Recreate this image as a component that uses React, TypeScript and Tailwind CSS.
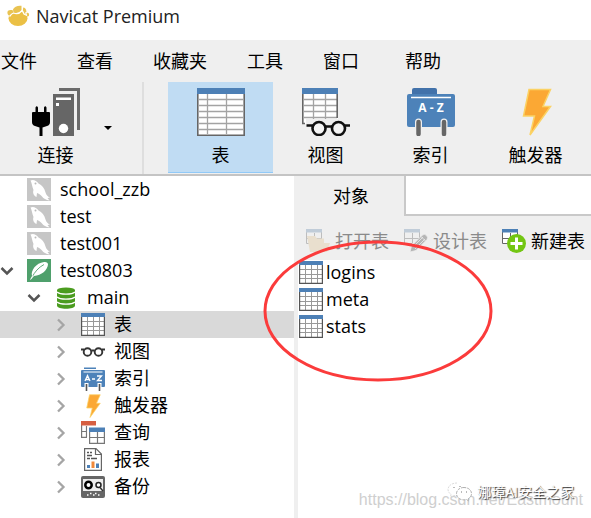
import React from "react";

type IconProps = { className?: string };

function AppLogo() {
  return (
    <svg className="h-[22px] w-6 shrink-0" viewBox="0 0 24 22" aria-hidden="true">
      <ellipse cx="12" cy="13.500" rx="9.500" ry="7.500" fill="#ebc045" />
      <path d="M1.500 8.500C.800 5.500 3 4.500 6.500 5L7.500 7.500 4.500 11C3 11 1.800 10 1.500 8.500Z" fill="#e9c352" />
      <path d="M7 4.500C8 1.500 12 .3 15.500 .8V5.500C13 8 9.500 8.800 7.500 7.500Z" fill="#e9c352" />
      <path d="M17.200 2.500C19 2.500 20 4 20.500 6.500L18.300 8.500 16.800 6Z" fill="#e9c352" />
      <path d="M20.500 8c1.700-.6 3 .3 2.500 2.300-.3 1-1 1.400-1.800 1.200Z" fill="#e9c352" />
      <path d="M3.500 11.500C5 9.500 6 8.500 7.500 8 11 9.500 14.500 7.500 16.200 5.500L18 9 21 10.500" fill="none" stroke="#fff" strokeWidth="1.300" />
    </svg>
  );
}

function ConnectionIcon() {
  return (
    <svg className="h-12 w-[50px]" viewBox="0 0 50 48" aria-hidden="true">
      <path d="M28 1.500H47.500V42" fill="none" stroke="#6b6b6b" strokeWidth="3" />
      <path d="M22 6H43V48H22Z" fill="#666" />
      <path d="M25 9.500H40V12H25ZM25 15H28V18H25Z" fill="#fff" />
      <circle cx="32.500" cy="40.500" r="4.700" fill="#fff" />
      <path d="M1 25Q1 24 2 24H4.500V19.500Q5.700 17 7 19.500V24H13V19.500Q14.300 17 15.500 19.500V24H18Q19 24 19 25V34Q19 37 16 38L11.500 39.500V48H8.500V39.500L4 38Q1 37 1 34Z" fill="#000" />
    </svg>
  );
}

function TableLargeIcon() {
  return (
    <svg className="size-12" viewBox="0 0 48 48" aria-hidden="true">
      <path d="M1 1H47V47H1Z" fill="#fff" />
      <path d="M2 11.500H46M2 17.500H46M2 23.500H46M2 29.500H46M2 35.500H46M2 41.500H46M10.500 6V46M29.500 6V46" stroke="#a3a3a3" strokeWidth="1.300" />
      <path d="M.800 5V47.200H47.200V5" fill="none" stroke="#666" strokeWidth="1.600" />
      <path d="M0 0H48V6H0Z" fill="#4d80b6" />
    </svg>
  );
}

function ViewLargeIcon() {
  return (
    <svg className="size-12" viewBox="0 0 48 48" aria-hidden="true">
      <path d="M0 1H36V31H4V36H0Z" fill="#fff" />
      <path d="M2 11.500H35M2 17.500H35M2 23.500H35M2 29.500H35M11.500 6V31M23.500 6V31" stroke="#a3a3a3" strokeWidth="1.300" />
      <path d="M.800 5V35.500H3M35.200 5V30" fill="none" stroke="#666" strokeWidth="1.600" />
      <path d="M0 0H36V6H0Z" fill="#4d80b6" />
      <g fill="#f5f5f5" stroke="#111" strokeWidth="2.600">
        <path d="M4.500 37.500H11M42 37.500H48M23 38.500H30" />
        <circle cx="17" cy="40.500" r="6.500" />
        <circle cx="36.500" cy="40.500" r="6.500" />
      </g>
    </svg>
  );
}

function IndexIcon({ className }: IconProps) {
  return (
    <svg className={className} viewBox="0 0 48 48" aria-hidden="true">
      <path d="M5 7V2Q5 0 7 0H28Q30 0 30 2V7Z" fill="#4272aa" />
      <rect y="6" width="48" height="33" rx="2" fill="#4d82b9" />
      <path d="M4 9.500H44" stroke="#fff" strokeWidth="1.500" />
      <text x="24" y="24" textAnchor="middle" fill="#fff" fontSize="12" fontWeight="700" fontFamily="Open Sans, sans-serif">A - Z</text>
      <path d="M11.500 34V45M37 34V45" stroke="#f0f0f0" strokeWidth="7" strokeLinecap="round" />
      <path d="M11.500 34V46M37 34V46" stroke="#666" strokeWidth="4.500" strokeLinecap="round" />
    </svg>
  );
}

function IndexSmallIcon() {
  return (
    <svg className="h-6 w-6" viewBox="0 0 24 24" aria-hidden="true">
      <path d="M3 .5H15V2H3Z" fill="#4d82b9" />
      <rect y="3" width="24" height="17" rx="1" fill="#4d82b9" />
      <path d="M2.500 5H21.500" stroke="#fff" />
      <path d="M4 14L6.500 8.500 9 14M5 12.500H8M11 12H14M16 9H20.500L16.500 13.500H21" fill="none" stroke="#fff" strokeWidth="1.300" />
      <path d="M5.500 16V24M18.500 16V24" stroke="#fff" strokeWidth="4" />
      <path d="M5.500 17V24M18.500 17V24" stroke="#555" strokeWidth="1.600" />
    </svg>
  );
}

function BoltIcon({ className }: IconProps) {
  return (
    <svg className={className} viewBox="0 0 48 48" aria-hidden="true">
      <path d="M17 1.500H38.500L31 18.500H38.500L18 47 22.500 28H11.500Z" fill="#fba834" stroke="#fbd264" strokeWidth="1.500" />
    </svg>
  );
}

function TableIcon() {
  return (
    <svg className="h-[23px] w-6" viewBox="0 0 24 23" aria-hidden="true">
      <path d="M0 0H24V23H0Z" fill="#fff" />
      <path d="M1 8.500H23M1 13.500H23M1 17.500H23M6.500 4V22M12.500 4V22M18.500 4V22" stroke="#999" />
      <path d="M.500 3V22.500H23.500V3" fill="none" stroke="#555" strokeWidth="1.400" />
      <path d="M0 0H24V4H0Z" fill="#4d80b6" />
    </svg>
  );
}

function GlassesIcon() {
  return (
    <svg className="h-[23px] w-6" viewBox="0 0 24 23" aria-hidden="true">
      <g fill="none" stroke="#333" strokeWidth="1.900">
        <path d="M0 9.500H3M21 9.500H24M10.500 10.500H13.500" />
        <circle cx="6.500" cy="12" r="3.800" />
        <circle cx="17.500" cy="12" r="3.800" />
      </g>
    </svg>
  );
}

function QueryIcon() {
  return (
    <svg className="h-6 w-6" viewBox="0 0 24 24" aria-hidden="true">
      <path d="M.600 4V16.400H6M5.500 5V16M1 10.500H6" fill="none" stroke="#777" strokeWidth="1.200" />
      <path d="M0 0H15V4.500H0Z" fill="#d65f42" />
      <path d="M6.500 5.500H24V24H6.500Z" fill="#fff" />
      <path d="M8.600 10V22.400H23.400V10M9 16.500H23M16.500 10V22" fill="none" stroke="#777" strokeWidth="1.200" />
      <path d="M8 6.500H24V11H8Z" fill="#4d80b6" />
    </svg>
  );
}

function ReportIcon() {
  return (
    <svg className="h-[23px] w-6" viewBox="0 0 24 23" aria-hidden="true">
      <path d="M3.600.600H15L20.400 6V22.400H3.600Z" fill="#fff" stroke="#666" strokeWidth="1.200" />
      <path d="M14.500 1V6.500H20" fill="none" stroke="#666" strokeWidth="1.200" />
      <path d="M6 4.500H8M9 4.500H11M6 7.500H11M6 10.500H9M10 10.500H16" stroke="#555" strokeWidth="1.300" />
      <path d="M6 17H9V20H6ZM15 15.500H18V20H15Z" fill="#4d80b6" />
      <path d="M10.500 13.500H13.500V20H10.500Z" fill="#f0893b" />
    </svg>
  );
}

function BackupIcon() {
  return (
    <svg className="h-[22px] w-6" viewBox="0 0 24 22" aria-hidden="true">
      <rect width="24" height="22" rx="2" fill="#666" />
      <path d="M2 3H22V15H2Z" fill="#eee" />
      <circle cx="7.500" cy="9" r="3.200" fill="#fff" stroke="#000" strokeWidth="2.500" />
      <circle cx="17.500" cy="9" r="2.500" fill="#fff" stroke="#222" strokeWidth="1.500" />
      <path d="M19 11.500L22 15" stroke="#333" strokeWidth="1.500" />
      <path d="M6 19H7.500M9 17.500H10.500M12 19H13.500M14 17.500H15.500M17 19H18.500" stroke="#fff" strokeWidth="1.500" />
    </svg>
  );
}

function MySqlIcon() {
  return (
    <svg className="h-[23px] w-6" viewBox="0 0 24 23" aria-hidden="true">
      <path d="M0 0H24V23H0Z" fill="#c6c6c6" />
      <path d="M3.500 2.500C6 1 9.500 2.500 11.500 5.500 15 7 17.500 10.500 18.500 14.500 19.300 17 20.500 18.500 23 19.500L20.500 20 22.500 22.500C19 22 16.500 20.500 15 18.500 13.500 16.500 11.500 15.500 10 15L9.500 19C6.500 18 5.500 14.500 6.500 12 5 8.500 5 5.500 3.500 2.500Z" fill="#fff" />
      <circle cx="8.500" cy="5.500" r="1" fill="#bbb" />
    </svg>
  );
}

function SqliteIcon() {
  return (
    <svg className="h-[23px] w-6" viewBox="0 0 24 23" aria-hidden="true">
      <path d="M0 0H24V23H0Z" fill="#4fa06c" />
      <path d="M5 17C3.500 11.500 9 4 17 3 19.500 2.700 21 3.500 21 5.500 20.500 11 14.500 16.500 7 17L4 20.500Z" fill="#fff" />
      <path d="M5 18.500C7.500 13 11.500 8.500 17 5.500" fill="none" stroke="#4fa06c" strokeWidth=".9" />
      <path d="M3.500 20.500L6 16.500" stroke="#fff" strokeWidth="1" />
    </svg>
  );
}

function DatabaseIcon() {
  return (
    <svg className="h-[22px] w-6" viewBox="0 0 24 22" aria-hidden="true">
      <path d="M3 3V18.500C3 22.800 21 22.800 21 18.500V3Z" fill="#4b9c1f" />
      <ellipse cx="12" cy="3.200" rx="9" ry="2.700" fill="#4b9c1f" />
      <path d="M3 5C6 7.800 18 7.800 21 5M3 10C6 12.800 18 12.800 21 10M3 15C6 17.800 18 17.800 21 15" fill="none" stroke="#fff" strokeWidth="1.300" />
    </svg>
  );
}

function SmallGrid({ dark }: { dark?: boolean }) {
  return (
    <>
      <path d="M.500 3V14.500H8M8.500 4V14M1 9.500H16M15.500 3V9" fill="none" stroke={dark ? "#666" : "#bdbdbd"} />
      <path d="M0 0H16V3.500H0Z" fill={dark ? "#4d80b6" : "#c0ccd8"} />
    </>
  );
}

function OpenTableIcon() {
  return (
    <svg className="size-6" viewBox="0 0 24 24" aria-hidden="true">
      <SmallGrid />
      <path d="M1 7H9L11 9.500H18V14H24L21 23H4Z" fill="#e9dfce" />
    </svg>
  );
}

function DesignTableIcon() {
  return (
    <svg className="size-6" viewBox="0 0 24 24" aria-hidden="true">
      <SmallGrid />
      <path d="M6 23L7.500 17 18.500 6Q20.500 4.500 22.500 6.500 24.500 8.500 23 10.500L12 21.500Z" fill="#b5b5b5" stroke="#efefef" strokeWidth=".8" />
      <path d="M17 7.500L21.500 12M9 18L19 8M11 20L21 10" stroke="#e7e7e7" strokeWidth=".9" />
    </svg>
  );
}

function NewTableIcon() {
  return (
    <svg className="size-6" viewBox="0 0 24 24" aria-hidden="true">
      <path d="M0 0H16V15H0Z" fill="#fff" />
      <SmallGrid dark />
      <circle cx="14.500" cy="14.500" r="9.500" fill="#73c613" />
      <path d="M14.500 8.500V20.500M8.500 14.500H20.500" stroke="#fff" strokeWidth="3" />
    </svg>
  );
}

function Chevron({ open }: { open: boolean }) {
  return (
    <svg className="size-3.5" viewBox="0 0 14 14" fill="none" aria-hidden="true">
      {open ? (
        <path d="M1.500 4L7 9.500 12.500 4" stroke="#555" strokeWidth="2.500" />
      ) : (
        <path d="M4 1.500L9.500 7 4 12.500" stroke="#a5a5a5" strokeWidth="2.300" />
      )}
    </svg>
  );
}

const menus = ["文件", "查看", "收藏夹", "工具", "窗口", "帮助"];

const tools = [
  { label: "表", icon: <TableLargeIcon />, active: true },
  { label: "视图", icon: <ViewLargeIcon /> },
  { label: "索引", icon: <IndexIcon className="size-12" /> },
  { label: "触发器", icon: <BoltIcon className="size-12" /> },
];

type Node = { label: string; level: 0 | 1 | 2; icon: React.ReactNode; open?: boolean; selected?: boolean };

const nodes: Node[] = [
  { label: "school_zzb", level: 0, icon: <MySqlIcon /> },
  { label: "test", level: 0, icon: <MySqlIcon /> },
  { label: "test001", level: 0, icon: <MySqlIcon /> },
  { label: "test0803", level: 0, icon: <SqliteIcon />, open: true },
  { label: "main", level: 1, icon: <DatabaseIcon />, open: true },
  { label: "表", level: 2, icon: <TableIcon />, open: false, selected: true },
  { label: "视图", level: 2, icon: <GlassesIcon />, open: false },
  { label: "索引", level: 2, icon: <IndexSmallIcon />, open: false },
  { label: "触发器", level: 2, icon: <BoltIcon className="size-6" />, open: false },
  { label: "查询", level: 2, icon: <QueryIcon />, open: false },
  { label: "报表", level: 2, icon: <ReportIcon />, open: false },
  { label: "备份", level: 2, icon: <BackupIcon />, open: false },
];

const indent = ["pl-0", "pl-[27px]", "pl-[54px]"];

const actions = [
  { label: "打开表", icon: <OpenTableIcon />, disabled: true },
  { label: "设计表", icon: <DesignTableIcon />, disabled: true },
  { label: "新建表", icon: <NewTableIcon />, disabled: false },
];

export default function App() {
  return (
    <div className="relative flex min-h-screen flex-col overflow-hidden bg-white font-['Open_Sans','Noto_Sans_CJK_SC',sans-serif] text-lg leading-[27px] text-black">
      <header className="flex h-10 items-center gap-1.5 pb-2 pl-1.5">
        <AppLogo />
        <h1 className="text-[#222]">Navicat Premium</h1>
      </header>

      <nav className="grid h-[42px] grid-cols-[76px_76px_94px_76px_82px_auto] items-center bg-[#efefef] pl-px">
        {menus.map((m) => (
          <button key={m} type="button" className="text-left whitespace-nowrap">
            {m}
          </button>
        ))}
      </nav>

      <div className="flex h-[94px] border-b-2 border-[#c4c4c4] bg-[#efefef]">
        <div className="flex w-36 items-start border-r-2 border-[#dedede] pl-[3px]">
          <button type="button" className="flex w-[105px] flex-col items-center gap-1.5 pt-1.5">
            <ConnectionIcon />
            <span>连接</span>
          </button>
          <button type="button" aria-label="连接选项" className="-ml-1 mt-10 flex h-3 w-2 items-center">
            <svg className="h-1 w-2" viewBox="0 0 8 4" aria-hidden="true">
              <path d="M0 0H8L4 4Z" fill="#000" />
            </svg>
          </button>
        </div>
        <div className="flex pl-6">
          {tools.map((t) => (
            <button
              key={t.label}
              type="button"
              className={`flex h-[91px] w-[105px] flex-col items-center gap-1.5 pt-1.5 ${t.active ? "border-b border-[#91c9f7] bg-[#c0dcf3]" : ""}`}
            >
              {t.icon}
              <span>{t.label}</span>
            </button>
          ))}
        </div>
      </div>

      <div className="flex flex-1">
        <ul className="w-[294px] shrink-0">
          {nodes.map((n) => (
            <li key={n.label} className={n.selected ? "bg-[#d9d9d9]" : ""}>
              <button type="button" className={`flex h-[27px] w-full items-center ${indent[n.level]}`}>
                <span className="w-[27px]">{n.open !== undefined && <Chevron open={n.open} />}</span>
                {n.icon}
                <span className="pl-[9px]">{n.label}</span>
              </button>
            </li>
          ))}
        </ul>

        <main className="flex flex-1 flex-col border-l-4 border-[#efefef]">
          <div className="flex h-10">
            <button type="button" className="w-[106px] bg-[#efefef] text-center">
              对象
            </button>
            <div className="flex-1 border-b-2 border-l-2 border-[#c9c9c9]" />
          </div>
          <div className="flex h-11 items-center gap-[15px] bg-[#efefef] pt-1.5 pl-2">
            {actions.map((a) => (
              <button
                key={a.label}
                type="button"
                disabled={a.disabled}
                className={`flex shrink-0 items-center gap-[5px] ${a.disabled ? "text-[#8a8a8a]" : ""}`}
              >
                {a.icon}
                {a.label}
              </button>
            ))}
          </div>
          <ul>
            {["logins", "meta", "stats"].map((t) => (
              <li key={t}>
                <button type="button" className="flex h-[27px] w-full items-center gap-[3px] pb-0.5 pl-px">
                  <TableIcon />
                  {t}
                </button>
              </li>
            ))}
          </ul>
        </main>
      </div>

      <svg className="pointer-events-none absolute top-[240px] left-[263px] h-[142px] w-[230px]" viewBox="0 0 230 142" aria-hidden="true">
        <ellipse cx="115" cy="71" rx="113" ry="69" fill="none" stroke="#fb3b3b" strokeWidth="3" />
      </svg>

      <div className="pointer-events-none absolute right-2 bottom-2 font-['Liberation_Sans',sans-serif] text-base leading-5 text-[#cfcfcf]">
        https://blog.csdn.net/Eastmount
      </div>
      <div className="pointer-events-none absolute right-[17px] bottom-4 flex items-center gap-1 text-sm leading-5 text-white [text-shadow:1px_1px_1px_#333]">
        <svg className="h-5 w-[26px]" viewBox="0 0 26 20" aria-hidden="true">
          <path d="M10 1C4.500 1 1 4 1 7.500c0 2 1 3.500 3 4.800L3.500 15l3-1.500 3.500.5" fill="#fff" stroke="#ccc" strokeWidth=".7" strokeDasharray="2 1" />
          <path d="M17 5.500c-4.500 0-7.500 2.800-7.500 6.200s3 6.200 7.500 6.200l2.500-.4 2.500 1.500-.5-2.500c2-1.200 3-2.800 3-4.800 0-3.400-3-6.200-7.500-6.200Z" fill="#fff" stroke="#999" strokeWidth=".8" strokeDasharray="3 1" />
          <path d="M6.500 5.500h1M12.500 4.500h1M14 10h1M19 10h1" stroke="#777" />
        </svg>
        <span>娜璋AI安全之家</span>
      </div>
    </div>
  );
}
